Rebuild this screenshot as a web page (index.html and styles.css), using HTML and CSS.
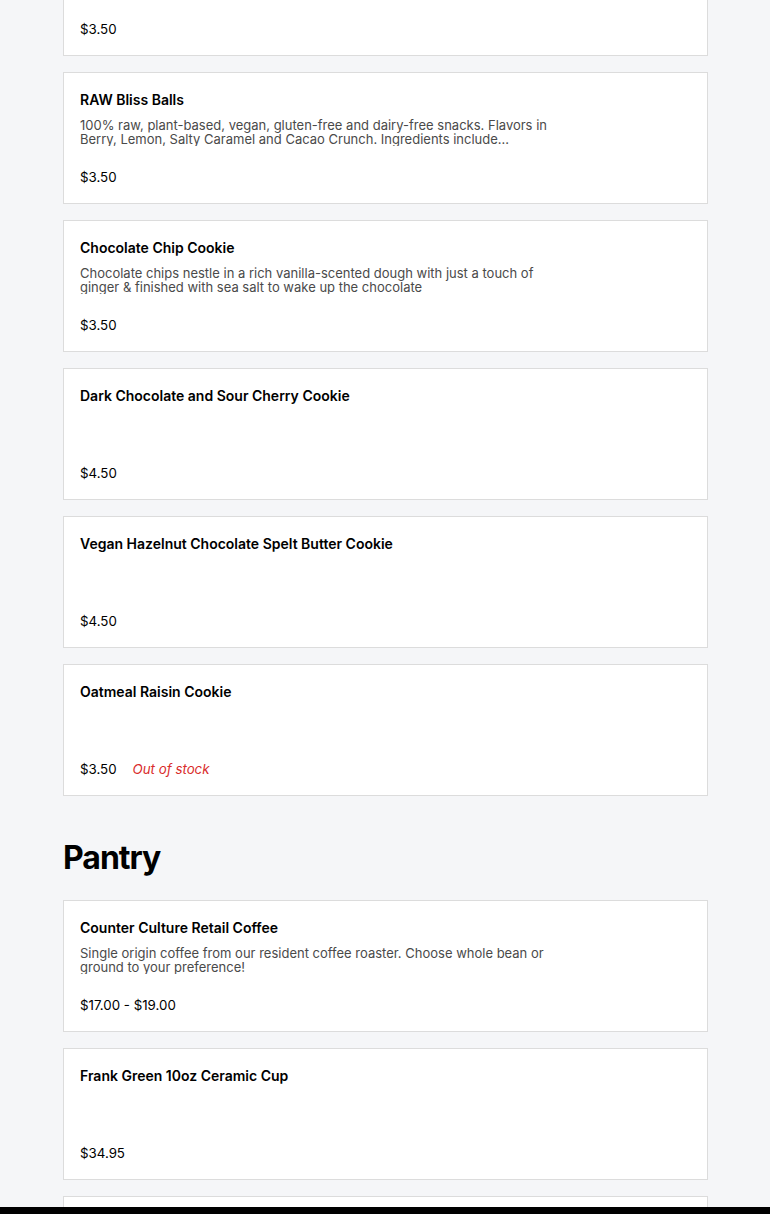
FILE: index.html
```html
<!DOCTYPE html>
<html lang="en">

<head>
    <meta charset="utf-8">
    <meta name="viewport" content="width=device-width, initial-scale=1.0">
    <title>Menu</title>
    <link rel="stylesheet" href="styles.css">
</head>

<body>
    <main class="menu">
        <section class="kategori">
            <!-- kortet er scrollet halvt ud af billedet -->
            <article class="vare">
                <h3 class="navn"></h3>
                <p class="beskrivelse"></p>
                <p class="pris">$3.50</p>
            </article>
            <article class="vare">
                <h3 class="navn">RAW Bliss Balls</h3>
                <p class="beskrivelse">100% raw, plant-based, vegan, gluten-free and dairy-free snacks. Flavors in Berry, Lemon, Salty Caramel and Cacao Crunch. Ingredients include...</p>
                <p class="pris">$3.50</p>
            </article>
            <article class="vare">
                <h3 class="navn">Chocolate Chip Cookie</h3>
                <p class="beskrivelse">Chocolate chips nestle in a rich vanilla-scented dough with just a touch of ginger &amp; finished with sea salt to wake up the chocolate</p>
                <p class="pris">$3.50</p>
            </article>
            <article class="vare">
                <h3 class="navn">Dark Chocolate and Sour Cherry Cookie</h3>
                <p class="beskrivelse"></p>
                <p class="pris">$4.50</p>
            </article>
            <article class="vare">
                <h3 class="navn">Vegan Hazelnut Chocolate Spelt Butter Cookie</h3>
                <p class="beskrivelse"></p>
                <p class="pris">$4.50</p>
            </article>
            <article class="vare">
                <h3 class="navn">Oatmeal Raisin Cookie</h3>
                <p class="beskrivelse"></p>
                <p class="pris">$3.50<span class="udsolgt">Out of stock</span></p>
            </article>
        </section>

        <section class="kategori">
            <h2>Pantry</h2>
            <article class="vare">
                <h3 class="navn">Counter Culture Retail Coffee</h3>
                <p class="beskrivelse">Single origin coffee from our resident coffee roaster. Choose whole bean or ground to your preference!</p>
                <p class="pris">$17.00 - $19.00</p>
            </article>
            <article class="vare">
                <h3 class="navn">Frank Green 10oz Ceramic Cup</h3>
                <p class="beskrivelse"></p>
                <p class="pris">$34.95</p>
            </article>
            <article class="vare"></article>
        </section>
    </main>

    <div class="kurv"></div>
</body>

</html>
```

FILE: styles.css
```css
* {
    box-sizing: border-box;
}

body {
    margin: 0;
    font-family: 'Inter', sans-serif;
    background-color: #f5f6f8;
    color: #000;
}

.menu {
    width: 645px;
    margin: -76px auto 0 63px;
}

.kategori {
    display: flex;
    flex-direction: column;
    gap: 16px;
}

.kategori h2 {
    margin: 42px 0 6px;
    font-size: 32px;
    line-height: 40px;
    font-weight: 700;
    letter-spacing: -1px;
}

.vare {
    background-color: #fff;
    border: 1px solid #dcdcdc;
    padding: 17px 16px 16px;
    height: 132px;
}

.navn {
    margin: 0;
    min-height: 20px;
    font-size: 14px;
    line-height: 20px;
    font-weight: 600;
}

.beskrivelse {
    margin: 8px 0 0;
    max-width: 480px;
    height: 28px;
    font-size: 13px;
    line-height: 14px;
    color: #4a4a4a;
    overflow: hidden;
}

.pris {
    margin: 21px 0 0;
    font-size: 13.3px;
    line-height: 20px;
}

.udsolgt {
    margin-left: 16px;
    color: #d92b2b;
    font-style: italic;
}

.kurv {
    position: fixed;
    left: 0;
    right: 0;
    bottom: 0;
    height: 7px;
    background-color: #000;
}
```
